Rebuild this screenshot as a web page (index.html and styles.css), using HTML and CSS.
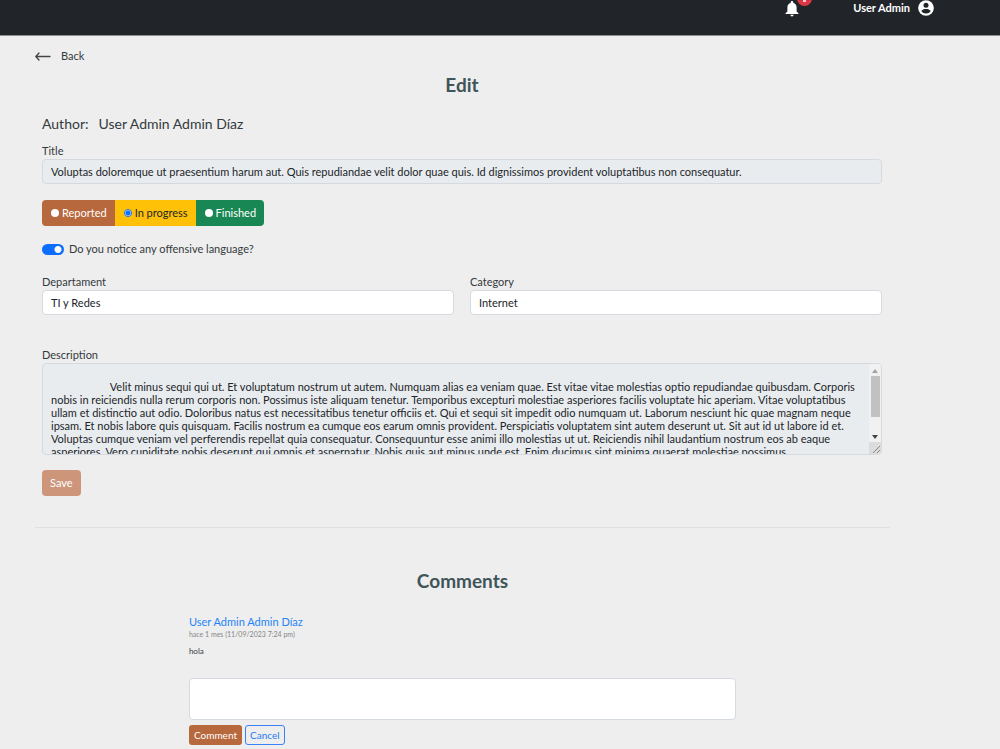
FILE: index.html
```html
<!DOCTYPE html>
<html lang="en">
<head>
<meta charset="utf-8">
<meta name="viewport" content="width=device-width, initial-scale=1">
<title>Edit</title>
<link rel="stylesheet" href="styles.css">
</head>
<body>
<header class="topbar">
  <button class="bell" type="button" aria-label="Notifications">
    <svg width="14" height="17" viewBox="0 0 14 17" aria-hidden="true"><path fill="#fff" d="M7 1c.7 0 1.200.5 1.200 1.200v.5C10.300 3.300 11.600 5.100 11.600 7.300v4.100L13.500 13.300V14H.5v-.7L2.400 11.400V7.300c0-2.200 1.300-4 3.400-4.600v-.5C5.800 1.500 6.300 1 7 1zM5.400 14.800h3.200a1.600 1.600 0 0 1-3.200 0z"/></svg>
    <span class="badge"></span>
  </button>
  <a class="user" href="#">User Admin
    <svg width="16" height="16" viewBox="0 0 16 16" aria-hidden="true"><circle cx="8" cy="8" r="7.800" fill="#fff"/><circle cx="8" cy="5.300" r="2.500" fill="#212529"/><path fill="#212529" d="M3.200 11c.8-1.500 3-2.100 4.800-2.100s4 .6 4.800 2.100A5.700 5.700 0 0 1 8 13.500 5.700 5.700 0 0 1 3.200 11z"/></svg>
  </a>
</header>
<main class="page">
  <a class="back" href="#">
    <svg width="16" height="10" viewBox="0 0 16 10" fill="none" stroke="#444" stroke-width="1.300" stroke-linecap="round" stroke-linejoin="round" aria-hidden="true"><path d="M15 5.500H.8M4 2L.8 5.500 4 9"/></svg>
    Back
  </a>
  <form class="ticket">
    <h1 class="heading">Edit</h1>
    <p class="author"><span>Author:</span><span>User Admin Admin Díaz</span></p>
    <label for="title">Title</label>
    <input class="control muted" id="title" type="text" readonly value="Voluptas doloremque ut praesentium harum aut. Quis repudiandae velit dolor quae quis. Id dignissimos provident voluptatibus non consequatur.">
    <div class="states">
      <label class="state reported"><input type="radio" name="state">Reported</label>
      <label class="state progress"><input type="radio" name="state" checked>In progress</label>
      <label class="state finished"><input type="radio" name="state">Finished</label>
    </div>
    <label class="switch"><input type="checkbox" role="switch" checked>Do you notice any offensive language?</label>
    <div class="pair">
      <div class="field"><label for="dept">Departament</label><select class="control" id="dept"><option>TI y Redes</option></select></div>
      <div class="field"><label for="cat">Category</label><select class="control" id="cat"><option>Internet</option></select></div>
    </div>
    <label for="desc">Description</label>
    <div class="scrollbox">
      <textarea class="control muted desc" id="desc" wrap="off" readonly>

                     Velit minus sequi qui ut. Et voluptatum nostrum ut autem. Numquam alias ea veniam quae. Est vitae vitae molestias optio repudiandae quibusdam. Corporis
nobis in reiciendis nulla rerum corporis non. Possimus iste aliquam tenetur. Temporibus excepturi molestiae asperiores facilis voluptate hic aperiam. Vitae voluptatibus
ullam et distinctio aut odio. Doloribus natus est necessitatibus tenetur officiis et. Qui et sequi sit impedit odio numquam ut. Laborum nesciunt hic quae magnam neque
ipsam. Et nobis labore quis quisquam. Facilis nostrum ea cumque eos earum omnis provident. Perspiciatis voluptatem sint autem deserunt ut. Sit aut id ut labore id et.
Voluptas cumque veniam vel perferendis repellat quia consequatur. Consequuntur esse animi illo molestias ut ut. Reiciendis nihil laudantium nostrum eos ab eaque
asperiores. Vero cupiditate nobis deserunt qui omnis et aspernatur. Nobis quis aut minus unde est. Enim ducimus sint minima quaerat molestiae possimus.
</textarea>
      <div class="scrollbar" aria-hidden="true">
        <svg class="arrow" width="6" height="4" viewBox="0 0 6 4"><path fill="#a3a3a3" d="M0 4l3-4 3 4z"/></svg>
        <span class="thumb"></span>
        <svg class="arrow" width="6" height="4" viewBox="0 0 6 4"><path fill="#444" d="M0 0l3 4 3-4z"/></svg>
        <svg class="grip" width="12" height="12" viewBox="0 0 12 12"><path fill="#dcdcdc" d="M0 0h12v12H0z"/><path stroke="#888" d="M4 11l7-7M8 11l3-3"/></svg>
      </div>
    </div>
    <button class="btn save" type="button">Save</button>
  </form>
  <hr class="rule">
  <section class="comments">
    <h2 class="heading">Comments</h2>
    <article class="comment">
      <a class="name" href="#">User Admin Admin Díaz</a>
      <time class="date">hace 1 mes (11/09/2023 7:24 pm)</time>
      <p class="body">hola</p>
    </article>
    <textarea class="control reply" aria-label="Write a comment"></textarea>
    <div class="actions">
      <button class="btn small primary" type="button">Comment</button>
      <button class="btn small outline" type="button">Cancel</button>
    </div>
  </section>
</main>
</body>
</html>
```
FILE: styles.css
```css
* { box-sizing: border-box; }
body {
  margin: 0;
  background: #eee;
  color: #343a40;
  font: 11px/16px Lato, "Noto Sans", sans-serif;
}
a { color: inherit; text-decoration: none; }
p, h1, h2 { margin: 0; }
button, input, select, textarea { font: inherit; color: inherit; margin: 0; }
label { display: block; }

.topbar {
  display: flex;
  justify-content: flex-end;
  align-items: flex-start;
  gap: 54px;
  height: 36px;
  padding-right: 66px;
  background: #212529;
  border-bottom: 1px solid #8b8d8f;
  overflow: hidden;
}
.bell { position: relative; height: 17px; padding: 0; border: 0; background: none; }
.bell svg { display: block; }
.badge {
  position: absolute;
  top: -9px;
  left: 12px;
  width: 15px;
  height: 15px;
  border-radius: 8px;
  background: #dc3545;
}
.badge::after {
  content: "";
  position: absolute;
  left: 6px;
  bottom: 4px;
  width: 3px;
  height: 2px;
  background: #f6c6cb;
}
.user { display: flex; align-items: center; gap: 8px; color: #fff; font-weight: 700; }

.page { padding: 12px 11% 0 35px; }
.back { display: flex; width: max-content; align-items: center; gap: 10px; }
.ticket { padding: 0 8px 0 7px; }
.heading {
  color: #3f5559;
  font-size: 19px;
  line-height: 24px;
  font-weight: 700;
  text-align: center;
}
.ticket .heading { margin-top: 9px; }
.author { display: flex; gap: 10px; margin: 17px 0 9px; font-size: 14px; line-height: 20px; }

.control {
  display: block;
  width: 100%;
  height: 25px;
  padding: 0 8px;
  border: 1px solid #d5dae0;
  border-radius: 4px;
  background: #fff;
  color: #212529;
  outline: 0;
  appearance: none;
}
.control.muted { background: #e9ecef; }

.states { display: flex; width: max-content; margin: 16px 0 15px; border-radius: 4px; overflow: hidden; }
.state { display: flex; align-items: center; gap: 3px; height: 26px; padding: 0 8px 0 9px; color: #fff; }
.state input {
  appearance: none;
  width: 8px;
  height: 8px;
  border-radius: 50%;
  background: #fff;
}
.state input:checked { border: 1px solid #0d6efd; background: radial-gradient(circle, #0d6efd 2px, #fff 3px); }
.reported { background: #b7683c; }
.progress { background: #ffc107; color: #212529; }
.finished { background: #198754; }

.switch { display: flex; align-items: center; gap: 5px; }
.switch input {
  appearance: none;
  width: 22px;
  height: 11px;
  border-radius: 6px;
  background: radial-gradient(circle at 16px 50%, #fff 3px, #0d6efd 4px);
}

.pair { display: grid; grid-template-columns: 1fr 1fr; gap: 16px; margin: 17px 0 32px; }
.scrollbox { position: relative; }
.desc {
  height: 92px;
  padding: 3px 8px;
  line-height: 13px;
  resize: none;
  overflow: hidden;
}
.scrollbar {
  position: absolute;
  top: 1px;
  right: 1px;
  bottom: 1px;
  display: flex;
  flex-direction: column;
  align-items: center;
  width: 12px;
  border-radius: 0 3px 3px 0;
  background: #f1f1f1;
  overflow: hidden;
}
.arrow { margin: 5px 0 3px; }
.thumb { width: 9px; height: 41px; margin-bottom: auto; background: #c1c1c1; }
.grip { flex: none; }

.btn { height: 26px; padding: 0 8px; border: 0; border-radius: 4px; color: #fff; }
.save { display: block; margin-top: 15px; background: #cd967a; }
.rule { height: 1px; margin: 31px 0 41px; border: 0; background: #dfe1e2; }

.comments .heading { margin-bottom: 22px; }
.comment, .reply, .actions { width: 64%; margin: 0 auto; }
.name { display: block; color: #1f85f8; font-size: 11px; line-height: 14px; }
.date { display: block; color: #868686; font-size: 7px; line-height: 10px; }
.body { margin: 6px 0 21px; font-size: 8px; line-height: 12px; }
.reply { height: 42px; resize: none; }
.actions { display: flex; gap: 3px; padding-top: 5px; }
.small { height: 20px; padding: 0 5px; border-radius: 3px; font-size: 10px; }
.primary { background: #b7683c; }
.outline { border: 1px solid #3b82f6; background: transparent; color: #1f7bf8; padding: 0 4px; }
```
